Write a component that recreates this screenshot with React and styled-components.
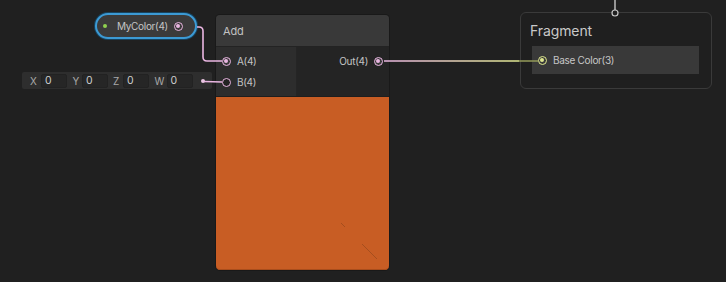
import React from "react";
import styled, { createGlobalStyle } from "styled-components";

const Global = createGlobalStyle`
  html, body { margin: 0; padding: 0; background: #202020; overflow: hidden; }
  * { box-sizing: border-box; }
`;

const FONT = `"Inter", "Noto Sans", "Liberation Sans", sans-serif`;

const Canvas = styled.div`
  position: relative;
  width: 726px;
  height: 282px;
  background: #202020;
  font-family: ${FONT};
  color: #c4c4c4;
  overflow: hidden;
`;

const Wires = styled.svg`
  position: absolute;
  left: 0;
  top: 0;
  width: 726px;
  height: 282px;
  pointer-events: none;
  z-index: 5;
`;

const Port = styled.span`
  position: relative;
  display: inline-block;
  flex: none;
  width: 9px;
  height: 9px;
  border-radius: 50%;
  border: 1.5px solid ${(p) => p.$color};
  background: ${(p) => (p.$filled ? "#3a3a3a" : "#222")};
  &::after {
    content: "";
    display: ${(p) => (p.$filled ? "block" : "none")};
    position: absolute;
    left: 1px;
    top: 1px;
    width: 4px;
    height: 4px;
    border-radius: 50%;
    background: ${(p) => p.$color};
  }
`;

/* ---------- Property pill ---------- */
const Pill = styled.div`
  position: absolute;
  left: 95px;
  top: 13px;
  width: 102px;
  height: 26px;
  border-radius: 13px;
  border: 2px solid #3c9ad4;
  box-shadow: 0 0 0 1px #17435e;
  background: #3b3b3b;
  display: flex;
  align-items: center;
  padding: 0 0 0 6px;
  font-size: 10px;
  letter-spacing: -0.3px;
  z-index: 2;
`;

const Dot = styled.span`
  width: 4px;
  height: 4px;
  border-radius: 50%;
  background: ${(p) => p.$color};
  flex: none;
`;

const PillLabel = styled.span`
  margin-left: 10px;
  margin-right: 6px;
  color: #c6c6c6;
`;

/* ---------- Add node ---------- */
const Node = styled.div`
  position: absolute;
  left: 216px;
  top: 15px;
  width: 173px;
  height: 255px;
  border-radius: 4px;
  background: #2a2a2a;
  display: flex;
  flex-direction: column;
  overflow: hidden;
  box-shadow: 0 0 0 1px #191919;
  z-index: 2;
`;

const Title = styled.div`
  height: 32px;
  background: #393939;
  border-bottom: 1px solid #232323;
  display: flex;
  align-items: center;
  padding-left: 7px;
  font-size: 11px;
  letter-spacing: -0.2px;
  color: #c2c2c2;
`;

const Ports = styled.div`
  height: 49px;
  display: flex;
`;

const Inputs = styled.div`
  width: 81px;
  background: #2d2d2d;
  border-right: 1px solid #252525;
  display: flex;
  flex-direction: column;
  padding-top: 9px;
  gap: 11px;
`;

const Outputs = styled.div`
  flex: 1;
  background: #242424;
  display: flex;
  flex-direction: column;
  align-items: flex-end;
  padding-top: 9px;
`;

const PortRow = styled.div`
  display: flex;
  align-items: center;
  height: 10px;
  gap: 6px;
  font-size: 10px;
  letter-spacing: -0.3px;
  color: #c4c4c4;
  flex-direction: ${(p) => (p.$right ? "row-reverse" : "row")};
  padding: ${(p) => (p.$right ? "0 6px 0 0" : "0 0 0 6px")};
`;

const Preview = styled.div`
  position: relative;
  flex: 1;
  background: #c85d24;
  border-top: 1px solid #1e1e1e;
  border-radius: 0 0 4px 4px;
  box-shadow: inset 0 -1px 0 #a94d1c;
`;

const PreviewMarks = styled.svg`
  position: absolute;
  left: 0;
  top: 0;
  width: 100%;
  height: 100%;
`;

/* ---------- inline vector field ---------- */
const Vector = styled.div`
  position: absolute;
  left: 22px;
  top: 72px;
  width: 190px;
  height: 17px;
  background: #2e2e2e;
  border-radius: 2px;
  display: flex;
  align-items: center;
  padding-left: 8px;
  z-index: 2;
`;

const Group = styled.div`
  display: flex;
  align-items: center;
  margin-left: ${(p) => p.$offset}px;
`;

const Axis = styled.span`
  width: ${(p) => p.$w}px;
  color: #a9a9a9;
  font-size: 10px;
`;

const Field = styled.span`
  width: 26px;
  height: 14px;
  background: #262626;
  border: 1px solid #222;
  border-radius: 2px;
  color: #cdcdcd;
  font-size: 10.5px;
  line-height: 12px;
  padding-left: 3px;
`;

const VDot = styled.span`
  margin-left: 8px;
  width: 4px;
  height: 4px;
  border-radius: 50%;
  background: #e9c5e2;
`;

/* ---------- Fragment context ---------- */
const Context = styled.div`
  position: absolute;
  left: 520px;
  top: 12px;
  width: 192px;
  height: 77px;
  border: 1px solid #3a3a3a;
  border-radius: 6px;
  background: #1f1f1f;
  padding: 8px 12px 0 9px;
  z-index: 1;
`;

const ContextTitle = styled.div`
  font-size: 14px;
  letter-spacing: -0.1px;
  color: #c9c9c9;
  height: 20px;
  line-height: 20px;
`;

const Block = styled.div`
  margin-top: 5px;
  margin-left: 2px;
  height: 28px;
  background: #393939;
  display: flex;
  align-items: center;
  padding-left: 6px;
  gap: 6px;
  font-size: 10px;
  letter-spacing: -0.3px;
  color: #c6c6c6;
`;

const PINK = "#eab6e2";
const YELLOW = "#dfe88f";

const axes = [
  { k: "X", w: 11, off: 0 },
  { k: "Y", w: 9.5, off: 5.5 },
  { k: "Z", w: 10, off: 5 },
  { k: "W", w: 12, off: 5.5 },
];

export default function App() {
  return (
    <>
      <Global />
      <Canvas>
        <Pill>
          <Dot $color="#8fd14f" />
          <PillLabel>MyColor(4)</PillLabel>
          <Port $color={PINK} $filled />
        </Pill>

        <Vector>
          {axes.map((a) => (
            <Group key={a.k} $offset={a.off}>
              <Axis $w={a.w}>{a.k}</Axis>
              <Field>0</Field>
            </Group>
          ))}
          <VDot />
        </Vector>

        <Node>
          <Title>Add</Title>
          <Ports>
            <Inputs>
              <PortRow>
                <Port $color={PINK} $filled />
                <span>A(4)</span>
              </PortRow>
              <PortRow>
                <Port $color={PINK} />
                <span>B(4)</span>
              </PortRow>
            </Inputs>
            <Outputs>
              <PortRow $right>
                <Port $color={PINK} $filled />
                <span>Out(4)</span>
              </PortRow>
            </Outputs>
          </Ports>
          <Preview>
            <PreviewMarks viewBox="0 0 173 173">
              <line x1="125" y1="126" x2="129" y2="130" stroke="#9c4a1d" strokeWidth="0.8" />
              <line x1="146" y1="147" x2="161" y2="162" stroke="#9c4a1d" strokeWidth="0.8" />
            </PreviewMarks>
          </Preview>
        </Node>

        <Context>
          <ContextTitle>Fragment</ContextTitle>
          <Block>
            <Port $color={YELLOW} $filled />
            <span>Base Color(3)</span>
          </Block>
        </Context>

        <Wires viewBox="0 0 726 282">
          <defs>
            <linearGradient id="g1" x1="383" y1="0" x2="520" y2="0" gradientUnits="userSpaceOnUse">
              <stop offset="0" stopColor={PINK} />
              <stop offset="1" stopColor={YELLOW} />
            </linearGradient>
          </defs>
          <path d="M197 27 H199 Q203 27 203 31 V57 Q203 61 207 61 H222" fill="none" stroke={PINK} strokeWidth="1.6" />
          <path d="M204 81.5 L222 82" fill="none" stroke={PINK} strokeWidth="1.6" />
          <path d="M384 61 H519" fill="none" stroke="url(#g1)" strokeWidth="1.6" />
          <path d="M519 61 H538" fill="none" stroke="#8f9557" strokeWidth="1.6" />
          <path d="M615 0 V10" fill="none" stroke="#c8c8c8" strokeWidth="1.4" />
          <circle cx="615" cy="13" r="3" fill="#202020" stroke="#c8c8c8" strokeWidth="1.2" />
        </Wires>
      </Canvas>
    </>
  );
}
